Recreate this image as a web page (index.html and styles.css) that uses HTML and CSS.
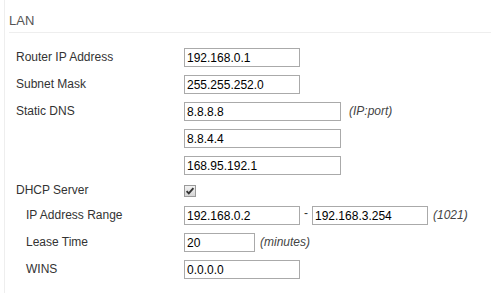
FILE: index.html
```html
<!DOCTYPE html>
<html lang="en">
<head>
    <meta charset="UTF-8">
    <meta name="viewport" content="width=device-width, initial-scale=1.0">
    <title>LAN Settings</title>
    <link rel="stylesheet" href="styles.css">
</head>
<body>
<div class="panel">
    <h2 class="panel-title">LAN</h2>

    <div class="form">
        <label class="field-label" for="routerIp">Router IP Address</label>
        <div class="field"><input class="text" id="routerIp" value="192.168.0.1"></div>

        <label class="field-label" for="subnet">Subnet Mask</label>
        <div class="field"><input class="text" id="subnet" value="255.255.252.0"></div>

        <label class="field-label" for="dns1">Static DNS</label>
        <div class="field">
            <input class="text wide" id="dns1" value="8.8.8.8">
            <span class="hint hint-dns">(IP:port)</span>
        </div>

        <div></div>
        <div class="field"><input class="text wide" value="8.8.4.4"></div>

        <div></div>
        <div class="field"><input class="text wide" value="168.95.192.1"></div>

        <label class="field-label check-row" for="dhcp">DHCP Server</label>
        <div class="field check-row">
            <label class="checkbox" for="dhcp">
                <input type="checkbox" id="dhcp" checked>
                <svg width="12" height="12" viewBox="0 0 12 12">
                    <defs>
                        <linearGradient id="boxFill" x1="0" y1="0" x2="0" y2="1">
                            <stop offset="0" stop-color="#f4f4f4"/>
                            <stop offset="1" stop-color="#d4d4d4"/>
                        </linearGradient>
                    </defs>
                    <rect x="0.5" y="0.5" width="11" height="11" fill="url(#boxFill)" stroke="#9a9a9a"/>
                    <path d="M2.6 6.2 L4.8 8.4 L9.4 3.2" fill="none" stroke="#333" stroke-width="1.9"/>
                </svg>
            </label>
        </div>

        <label class="field-label sub" for="rangeStart">IP Address Range</label>
        <div class="field">
            <input class="text" id="rangeStart" value="192.168.0.2">
            <span class="dash">-</span>
            <input class="text" value="192.168.3.254">
            <span class="hint">(1021)</span>
        </div>

        <label class="field-label sub" for="lease">Lease Time</label>
        <div class="field">
            <input class="text short" id="lease" value="20">
            <span class="hint">(minutes)</span>
        </div>

        <label class="field-label sub" for="wins">WINS</label>
        <div class="field"><input class="text" id="wins" value="0.0.0.0"></div>
    </div>
</div>
</body>
</html>
```

FILE: styles.css
```css
body {
    margin: 0;
    font-family: "Liberation Sans", Arial, sans-serif;
    font-size: 12px;
    color: #333;
    background-color: #fff;
}

.panel {
    margin-left: 4px;
    min-height: 100vh;
    border-left: 1px solid #eee;
    padding-left: 4px;
    box-sizing: border-box;
}

.panel-title {
    margin: 0;
    padding: 13px 0 4px;
    font-size: 13px;
    font-weight: normal;
    line-height: 15px;
    color: #555;
    border-bottom: 1px solid #eee;
}

.form {
    display: grid;
    grid-template-columns: 175px 1fr;
    row-gap: 8px;
    margin-top: 15px;
    align-items: center;
}

.field-label {
    padding-left: 7px;
    line-height: 15px;
}

.field-label.sub {
    padding-left: 17px;
}

.field {
    display: flex;
    align-items: center;
}

.text {
    box-sizing: border-box;
    width: 116px;
    height: 19px;
    margin: 0;
    padding: 0 2px;
    border: 1px solid #aaa;
    font-family: "Liberation Sans", Arial, sans-serif;
    font-size: 12px;
    color: #000;
    background-color: #fff;
}

.text.wide {
    width: 157px;
}

.text.short {
    width: 71px;
}

.hint {
    margin-left: 5px;
    font-style: italic;
    color: #444;
    line-height: 15px;
}

.hint-dns {
    margin-left: 8px;
}

.dash {
    align-self: flex-start;
    margin: 0 4px;
    line-height: 14px;
    color: #333;
}

.check-row {
    height: 15px;
}

.checkbox {
    position: relative;
    display: block;
    width: 12px;
    height: 12px;
    margin-top: 1px;
}

.checkbox input {
    position: absolute;
    top: 0;
    left: 0;
    width: 12px;
    height: 12px;
    margin: 0;
    opacity: 0;
}

.checkbox svg {
    display: block;
}
```
